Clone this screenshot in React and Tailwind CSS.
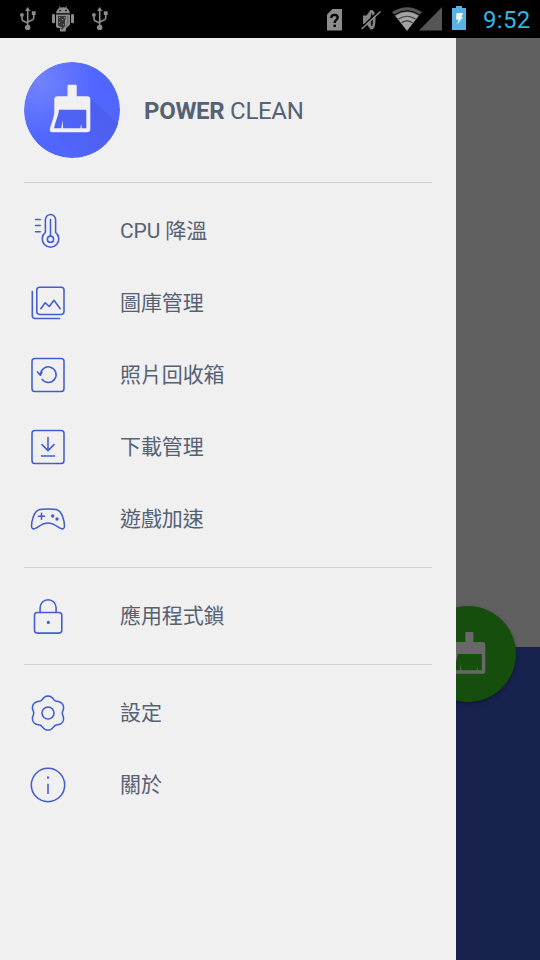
import React from "react";

const ICON = "h-12 w-12 shrink-0";

function LineIcon({ children }) {
  return (
    <svg
      className={ICON}
      viewBox="0 0 48 48"
      fill="none"
      stroke="#435bd0"
      strokeWidth="1.55"
      strokeLinecap="round"
      strokeLinejoin="round"
    >
      {children}
    </svg>
  );
}

// Six rounded lobes joined by shallow notches.
function gearPath() {
  const pts = [];
  for (let i = 0; i < 180; i++) {
    const a = (i / 180) * Math.PI * 2;
    const c = Math.cos(6 * (a - Math.PI / 2));
    const r = 15.8 + 1.35 * c - 0.15 * (2 * c * c - 1);
    pts.push(`${(24 + r * Math.cos(a)).toFixed(2)} ${(24.1 + r * Math.sin(a)).toFixed(2)}`);
  }
  return `M${pts.join("L")}Z`;
}

const icons = {
  cpu: (
    <LineIcon>
      <path d="M21.4 25.4V12.6a5.1 5.1 0 0 1 10.2 0v12.8a8.3 8.3 0 1 1-10.2 0Z" />
      <path d="M26.5 12.5V29M11.6 12.5h4.7M11.6 18.5h4.7M11.6 24.7h4.7" />
      <circle cx="26.5" cy="32.2" r="3.1" />
    </LineIcon>
  ),
  gallery: (
    <LineIcon>
      <rect x="12.8" y="8.2" width="27.2" height="27.2" rx="2.8" />
      <path d="M8.3 12.5v24a3 3 0 0 0 3 3h24.3M16.8 29.7l4.4-6 4 3.8 4.8-6.2 6.2 8.4" />
    </LineIcon>
  ),
  restore: (
    <LineIcon>
      <rect x="8" y="7.5" width="32" height="33" rx="2.8" />
      <path d="M16.5 24a7.8 7.8 0 1 1 1.6 4.400M13.5 20.9l2.9 3.4 1.5-3.2" />
    </LineIcon>
  ),
  download: (
    <LineIcon>
      <rect x="8" y="7.5" width="32" height="33" rx="2.8" />
      <path d="M24 14.5v13M18 21.6l6 6 6-6M17.5 33h13" />
    </LineIcon>
  ),
  game: (
    <LineIcon>
      <path d="M24 13.9c3.6 0 6 .1 8.3.7 3.4.9 5 3.2 6.4 7.2 1.2 3.5 1.8 6.6 1.8 9.5 0 2.7-2.2 3.2-4.3 1.9-3.6-2.3-7-5.3-12.2-5.3s-8.6 3-12.2 5.3c-2.1 1.3-4.3.8-4.3-1.9 0-2.9.6-6 1.8-9.5 1.4-4 3-6.3 6.4-7.2 2.3-.6 4.7-.7 8.3-.7Z" />
      <path d="M17.5 18.3v6M14.5 21.3h6" />
      <circle cx="28.7" cy="21" r="0.9" fill="#435bd0" />
      <circle cx="33" cy="24" r="0.9" fill="#435bd0" />
    </LineIcon>
  ),
  lock: (
    <LineIcon>
      <rect x="10.5" y="20.5" width="27.3" height="20.6" rx="2.8" />
      <path d="M16.1 20.3V15.7a8 8 0 0 1 16 0v4.6" />
      <circle cx="24.3" cy="30.4" r="0.8" fill="#435bd0" />
    </LineIcon>
  ),
  settings: (
    <LineIcon>
      <path d={gearPath()} />
      <circle cx="24" cy="24" r="6" />
    </LineIcon>
  ),
  about: (
    <LineIcon>
      <circle cx="24" cy="24" r="16.7" />
      <path strokeLinecap="butt" d="M24 15.2v2.8M24 22.8V33" />
    </LineIcon>
  ),
};

function Row({ icon, label }) {
  return (
    <li className="flex h-[72px] items-center px-6">
      {icons[icon]}
      <span className="ml-12 text-[21px] leading-7 tracking-[-0.1px]">{label}</span>
    </li>
  );
}

function Divider() {
  return <div className="mx-6 h-px bg-[#d0d2d2]" />;
}

const BRUSH =
  "M44.8 22.7h6.6q1.3 0 1.3 1.3v10.2H63q3.3 0 3.3 3.3V67q0 3.3-3.3 3.3H29q-3.9 0-3.1-3.6C27 61 30.3 57 30.3 48V37.5q0-3.3 3.3-3.3h9.9V24q0-1.3 1.3-1.3Z M35 47.7C34.400 54 31.800 58 30 66.300H37.300l1.300-8 .5 8h17.300l.7-4.500.7 4.500h4.500V47.700Z";

function Logo() {
  return (
    <svg className="h-24 w-24 shrink-0" viewBox="0 0 96 96">
      <defs>
        <radialGradient id="logoFill" cx="0.15" cy="0.2" r="0.6">
          <stop offset="0" stopColor="#7283fd" />
          <stop offset="1" stopColor="#5066ff" />
        </radialGradient>
        <linearGradient id="logoShade" x1="0.2" y1="0.8" x2="0.9" y2="0.3">
          <stop offset="0" stopColor="#5065fa" />
          <stop offset="1" stopColor="#4c5eec" />
        </linearGradient>
        <clipPath id="logoClip">
          <circle cx="48" cy="48" r="48" />
        </clipPath>
      </defs>
      <g clipPath="url(#logoClip)">
        <circle cx="48" cy="48" r="48" fill="url(#logoFill)" />
        <path d="M66 36 96 63v33H54L27 69l6-23h33Z" fill="url(#logoShade)" />
      </g>
      <path d={BRUSH} fill="#f1f1f2" fillRule="evenodd" />
    </svg>
  );
}

function Usb() {
  return (
    <svg className="h-6 w-4 shrink-0" viewBox="0 0 16 24" fill="none" stroke="#8c8c8c" strokeWidth="1.6">
      <path d="M7.7 20V3M2 9.5V12q0 1.5 1.4 2.1l4.3 2M13.7 7.5V11q0 1.3-1.2 1.8l-4.8 2.1" />
      <path d="M7.7 0 10.3 4H5.1Z" fill="#8c8c8c" stroke="none" />
      <circle cx="7.7" cy="20.4" r="2.7" fill="#8c8c8c" stroke="none" />
      <circle cx="1.9" cy="8" r="1.9" fill="#8c8c8c" stroke="none" />
      <path d="M11.8 4.3h3.9v3.7h-3.9Z" fill="#8c8c8c" stroke="none" />
    </svg>
  );
}

function Droid() {
  return (
    <svg className="ml-4 h-[26px] w-[22px] shrink-0" viewBox="0 0 22 26" fill="#8c8c8c">
      <path d="M4 7.2C4.3 4.5 6 2.5 7.8 1.8L6.8.4l.6-.4 1.2 1.5q2.4-.6 4.8 0L14.6 0l.6.4-1 1.4C16 2.5 17.7 4.5 18 7.2Z" />
      <circle cx="8" cy="4.6" r=".8" fill="#000" />
      <circle cx="14" cy="4.6" r=".8" fill="#000" />
      <rect x="0" y="8" width="3" height="9.3" rx="1.4" />
      <rect x="19" y="8" width="3" height="9.3" rx="1.4" />
      <path d="M4 8.5h14v10.3l-3.5 3-1 3.6H8v-3.5H6q-2 0-2-2Z" />
      <path d="M6 10h8l-1 5v5l-3 4-2-3.5-2-1Z" fill="#383838" />
      <path d="M7 11h1v1H7Zm3 2h1v1h-1Zm-3 3h1v1H7Zm4 2h1v1h-1Zm-2 3h1v1H9Zm3-10h1v1h-1Z" />
      <path d="M15.8 10v8l-3 3" fill="none" stroke="#666" />
    </svg>
  );
}

function StatusBar() {
  return (
    <header className="flex h-[38px] shrink-0 items-center bg-black pl-5">
      <Usb />
      <Droid />
      <span className="w-[18px]" />
      <Usb />
      <svg className="mt-0.5 ml-[219px] h-[22px] w-[15px] shrink-0" viewBox="0 0 15 22">
        <path d="M5.5 0H15v21.5H0V5.5Z" fill="#8c8c8c" />
        <path d="M4.2 8.8q.2-3 3.3-3 3.2 0 3.2 2.8 0 1.4-1.6 2.5-1.5 1-1.5 2.9" fill="none" stroke="#000" strokeWidth="2.3" />
        <path d="M6.5 15.7h2.4v2.3H6.5Z" />
      </svg>
      <svg className="mt-0.5 ml-[19px] h-[22px] w-5 shrink-0" viewBox="0 0 20 22">
        <path d="M2 6.500h3.500L9.500 1q5-1 5 9.700t-5 9.800L5.500 15H2Z" fill="#858585" />
        <ellipse cx="10.800" cy="10.700" rx="1.200" ry="6.500" fill="#111" />
        <path d="M0 18.700 18.500 1.200" stroke="#000" strokeWidth="1.400" />
        <path d="M.7 20 19.500 2.500" stroke="#8c8c8c" strokeWidth="1.500" />
      </svg>
      <svg className="ml-[11px] h-6 w-[50px] shrink-0" viewBox="0 0 50 24">
        <path d="M50 0v23.5H27Z" fill="#555" />
        <path d="M0 5Q15-4.4 30 5L15 23.7Z" fill="#555" />
        <path d="M3.4 8.8Q15 1 26.6 8.8L15 23.7Z" fill="#a3a3a3" />
        <path d="M6.5 12Q15 6.5 23.5 12M9.500 15.700Q15 12 20.500 15.700" fill="none" stroke="#3b3b3b" strokeWidth="1.2" />
        <path d="M2 8.2Q15-.7 28 8.2" fill="none" stroke="#000" strokeWidth="1" />
      </svg>
      <svg className="-mt-0.5 ml-2.5 h-6 w-[14px] shrink-0" viewBox="0 0 14 24">
        <path d="M4 0h6v2h4v22H0V2h4Z" fill="#58b3e5" />
        <path d="M4.5 7H11L9.3 11H11L5.3 18.5 6.5 13.5H4Z" fill="#f1f5f7" />
      </svg>
      <span className="mt-0.5 ml-[17px] text-2xl leading-none tracking-[0.3px] text-[#33b5e5]">9:52</span>
    </header>
  );
}

export default function App() {
  return (
    <div className="flex h-[960px] w-[540px] flex-col overflow-hidden bg-[#efefef] font-['Roboto','Noto_Sans_CJK_TC',sans-serif] text-[#566173]">
      <StatusBar />
      <div className="flex min-h-0 flex-1">
        <nav className="z-10 w-[456px] shrink-0 bg-[#f0f0f0]">
          <div className="flex h-36 items-center gap-6 px-6">
            <Logo />
            <h1 className="pt-0.5 text-2xl leading-8 tracking-[-0.3px] whitespace-nowrap">
              <b className="font-bold">POWER</b> CLEAN
            </h1>
          </div>
          <Divider />
          <ul className="py-3">
            <Row icon="cpu" label="CPU 降溫" />
            <Row icon="gallery" label="圖庫管理" />
            <Row icon="restore" label="照片回收箱" />
            <Row icon="download" label="下載管理" />
            <Row icon="game" label="遊戲加速" />
          </ul>
          <Divider />
          <ul className="py-3">
            <Row icon="lock" label="應用程式鎖" />
          </ul>
          <Divider />
          <ul className="py-3">
            <Row icon="settings" label="設定" />
            <Row icon="about" label="關於" />
          </ul>
        </nav>
        <main className="relative flex flex-1 flex-col">
          <div className="h-[609px] bg-[#606060]" />
          <div className="flex-1 bg-[#18224e]" />
          <div className="absolute top-[568px] right-6 h-24 w-24 rounded-full bg-[#154e0d] shadow-[0_2px_4px_rgba(0,0,0,0.3)]">
            <svg className="h-24 w-24" viewBox="0 0 96 96">
              <path d={BRUSH} transform="translate(7 6) scale(.88)" fill="#686868" fillRule="evenodd" />
            </svg>
          </div>
        </main>
      </div>
    </div>
  );
}
